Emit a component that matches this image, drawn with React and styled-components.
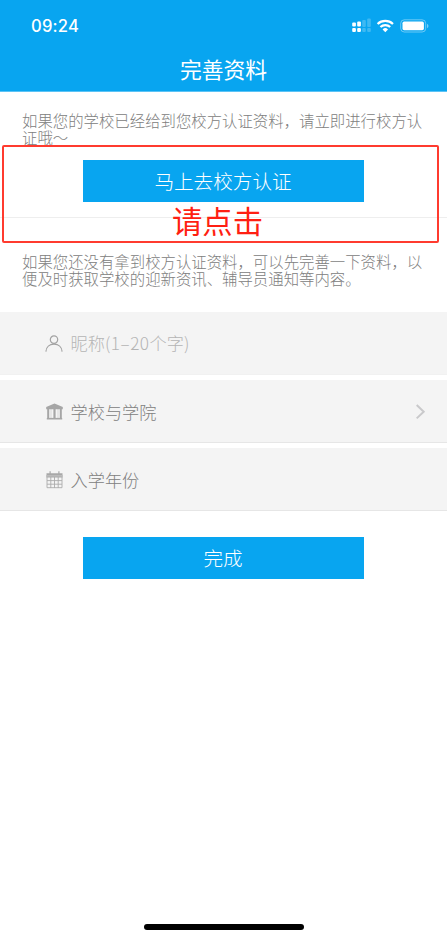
import React from "react";
import styled, { createGlobalStyle } from "styled-components";

const GlobalStyle = createGlobalStyle`
  * {
    box-sizing: border-box;
  }
  body {
    margin: 0;
    background: #ffffff;
    font-family: "Noto Sans CJK SC", sans-serif;
    font-weight: 300;
  }
`;

const Page = styled.div`
  width: 447px;
  height: 938px;
  display: flex;
  flex-direction: column;
  background: #ffffff;
  overflow: hidden;
`;

const Header = styled.header`
  height: 92px;
  background: #08a5f0;
  border-bottom: 1px solid #5cc3f5;
  color: white;
`;

const StatusBar = styled.div`
  height: 50px;
  padding: 2px 18px 0 31px;
  display: flex;
  align-items: center;
  justify-content: space-between;
`;

const Time = styled.span`
  font-family: Inter, sans-serif;
  font-size: 16.6px;
  font-weight: 500;
  letter-spacing: 0.2px;
`;

const StatusIcons = styled.svg`
  display: block;
`;

const Title = styled.h1`
  margin: 0;
  height: 38px;
  line-height: 37px;
  text-align: center;
  font-size: 21.8px;
  font-weight: 400;
`;

const Section = styled.section`
  position: relative;
  height: ${({ $height }) => $height}px;
  padding: ${({ $top }) => $top}px 0 0;
  border-bottom: ${({ $line }) => ($line ? "1px solid #eeeeee" : "none")};
`;

const Tip = styled.p`
  margin: 0 0 14px 22px;
  color: #808080;
  font-size: 15.4px;
  line-height: 17px;
  white-space: nowrap;
`;

const Button = styled.button`
  display: block;
  width: 281px;
  height: 42px;
  margin: 0 auto;
  padding: 0 1px 0 0;
  border: none;
  background: #08a5f0;
  color: white;
  font-family: inherit;
  font-weight: 300;
  font-size: 19.6px;
  line-height: 42px;
`;

// red frame drawn over the first section
const Mark = styled.div`
  position: absolute;
  z-index: 1;
  top: 53px;
  left: 2px;
  width: 437px;
  height: 98px;
  border: 2px solid #ff3b2f;
  border-radius: 2px;
  display: flex;
  align-items: flex-end;
  justify-content: center;
`;

const MarkText = styled.span`
  color: #ff1f12;
  font-size: 30.4px;
  font-weight: 400;
  line-height: 42px;
  margin-left: -6px;
`;

const Fields = styled.div`
  display: flex;
  flex-direction: column;
  gap: 5px;
  margin-bottom: 26px;
`;

const Field = styled.div`
  height: 63px;
  padding: ${({ $plain }) => ($plain ? 0 : 2)}px 20px 0 45px;
  display: flex;
  align-items: center;
  background: #f4f4f4;
  border-bottom: 1px solid ${({ $plain }) => ($plain ? "#f1f1f1" : "#e6e6e6")};
  svg {
    display: block;
    flex: none;
  }
`;

const Label = styled.span`
  flex: 1;
  margin-left: 7.5px;
  color: ${({ $muted }) => ($muted ? "#b4b4b4" : "#808080")};
  font-size: 17.2px;
  line-height: 24px;
`;

const Range = styled.span`
  letter-spacing: 0.5px;
`;

const HomeBar = styled.div`
  width: 160px;
  height: 6px;
  margin: auto auto 8px;
  border-radius: 3px;
  background: #000000;
`;

const UserIcon = () => (
  <svg width="18" height="20" viewBox="0 0 18 20" fill="none" stroke="#a2a2a2" strokeWidth="1.2">
    <circle cx="9" cy="6.6" r="3.7" />
    <path d="M.9 18.6C1.2 14 4.5 11.2 9 11.2s7.8 2.8 8.1 7.4" />
  </svg>
);

const SchoolIcon = () => (
  <svg width="18" height="18" viewBox="0 0 18 18" fill="#a6a6a6">
    <path d="M9.5.6 17.8 4v2.2H1.2V4z" />
    <path d="M2.2 6h2v9.5h-2zM8.4 6h2.2v9.5H8.4zM14.8 6h2v9.5h-2z" />
    <path d="M5.6 6h.8v9h-.8zM12.6 6h.8v9h-.8z" opacity=".45" />
    <path d="M1.8 14.9h15.4v1.6H1.8z" />
  </svg>
);

const CalendarIcon = () => (
  <svg width="18" height="18" viewBox="0 0 18 18">
    <path d="M1.5 2.3h16v4.2h-16zM4.5.3h1.2v3H4.5zM13.3.3h1.2v3h-1.2z" fill="#a8a8a8" />
    <path
      d="M2 4v12.7h15V4M2 9.6h15M2 13.2h15M5.8 6v11M9.5 6v11M13.2 6v11"
      fill="none"
      stroke="#acacac"
      strokeWidth=".9"
    />
    <path d="M1.5 4.9h16" stroke="#d6d6d6" strokeWidth=".7" />
  </svg>
);

const Arrow = () => (
  <svg width="12" height="18" viewBox="0 0 12 18" fill="none" stroke="#c9c9cb" strokeWidth="2">
    <path d="M1.7 2 8.7 8.7 1.7 15.4" />
  </svg>
);

const Status = () => (
  <StatusIcons width="78" height="18" viewBox="0 0 78 18" fill="white">
    <g>
      <rect x="1.2" y="5.5" width="3.7" height="4" rx="1" />
      <rect x="6.2" y="4.5" width="3.7" height="5" rx="1" />
      <rect x="1.2" y="11" width="3.7" height="4" rx="1" />
      <rect x="6.2" y="11" width="3.7" height="4" rx="1" />
    </g>
    <g opacity=".22">
      <rect x="11.2" y="3" width="3.6" height="7" rx="1" />
      <rect x="16.2" y="1.5" width="3.6" height="8.5" rx="1" />
      <rect x="11.2" y="11" width="3.6" height="4" rx="1" />
      <rect x="16.2" y="11" width="3.6" height="4" rx="1" />
    </g>
    <g fill="none" stroke="white" strokeWidth="2.2">
      <path d="M26.6 7a11.3 11.3 0 0 1 15.4 0" />
      <path d="M29.4 10a7.2 7.2 0 0 1 9.8 0" />
    </g>
    <path d="M34.3 15.2l-2.7-2.8a3.9 3.9 0 0 1 5.4 0z" />
    <rect x="49.7" y="2.8" width="25" height="12.2" rx="3.6" fill="none" stroke="white" opacity=".4" />
    <rect x="51.5" y="4.6" width="21.4" height="8.6" rx="1.6" />
    <path d="M76 6.8c2 .8 2 3.6 0 4.4z" opacity=".45" />
  </StatusIcons>
);

const App = () => {
  return (
    <>
      <GlobalStyle />
      <Page>
        <Header>
          <StatusBar>
            <Time>09:24</Time>
            <Status />
          </StatusBar>
          <Title>完善资料</Title>
        </Header>
        <Section $height={126} $top={20} $line>
          <Tip>
            如果您的学校已经给到您校方认证资料，请立即进行校方认
            <br />
            证哦～
          </Tip>
          <Button>马上去校方认证</Button>
          <Mark>
            <MarkText>请点击</MarkText>
          </Mark>
        </Section>
        <Section $height={94} $top={35}>
          <Tip>
            如果您还没有拿到校方认证资料，可以先完善一下资料，以
            <br />
            便及时获取学校的迎新资讯、辅导员通知等内容。
          </Tip>
        </Section>
        <Fields>
          <Field $plain>
            <UserIcon />
            <Label $muted>
              昵称<Range>(1–20</Range>个字)
            </Label>
          </Field>
          <Field>
            <SchoolIcon />
            <Label>学校与学院</Label>
            <Arrow />
          </Field>
          <Field>
            <CalendarIcon />
            <Label>入学年份</Label>
          </Field>
        </Fields>
        <Button>完成</Button>
        <HomeBar />
      </Page>
    </>
  );
};

export default App;
